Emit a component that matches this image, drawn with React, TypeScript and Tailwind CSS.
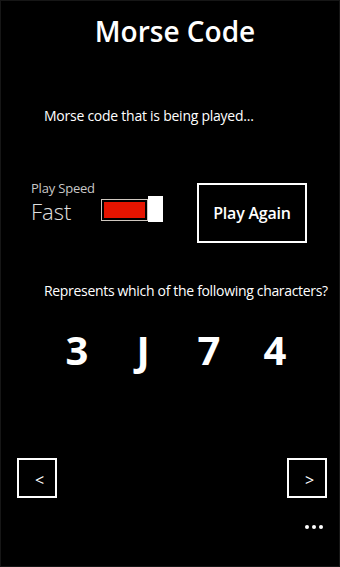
import React from "react";

export default function App() {
  const chars = ["3", "J", "7", "4"];
  return (
    <div
      className="w-[340px] h-[567px] bg-black text-white flex flex-col border border-[#161616] overflow-hidden box-border"
      style={{ fontFamily: '"Open Sans", "Noto Sans", sans-serif' }}
    >
      <div className="mt-[13px] pl-[10px] text-center text-[28px] font-semibold leading-[34px]">
        Morse Code
      </div>

      <div className="mt-[58px] pl-[43px] text-[14px] leading-[20px] tracking-[-0.25px] whitespace-nowrap">
        Morse code that is being played...
      </div>

      <div className="mt-[54px] flex items-start">
        <div className="pl-[30px] flex flex-col">
          <div className="text-[13px] leading-[16px] tracking-[-0.2px] text-[#c8c8c8]">Play Speed</div>
          <div className="mt-[2px] flex items-start">
            <div className="w-[70px] text-[22px] font-light leading-[26px] text-[#e0e0e0]">Fast</div>
            <div className="-mt-[2px] flex items-start">
              <div className="mt-[3px] w-[47px] h-[22px] border border-[#cfc7bf] p-[2px] box-border">
                <div className="w-full h-full bg-[#e51400]" />
              </div>
              <div className="w-[15px] h-[26px] bg-white" />
            </div>
          </div>
        </div>
        <div className="ml-auto mr-[32px] mt-[3px] w-[110px] h-[60px] border-2 border-white flex items-center justify-center text-[16px] font-semibold tracking-[-0.2px]">
          Play Again
        </div>
      </div>

      <div className="mt-[38px] pl-[43px] text-[14px] leading-[20px] tracking-[-0.32px] whitespace-nowrap">
        Represents which of the following characters?
      </div>

      <div className="mt-[25px] pl-[43px] grid grid-cols-[66px_66px_66px_66px] text-[40px] font-bold leading-[48px]">
        {chars.map((c) => (
          <div key={c} className="text-center">
            {c}
          </div>
        ))}
      </div>

      <div className="mt-[84px] flex justify-between pl-[16px] pr-[12px]">
        <div className="w-[40px] h-[40px] border-2 border-white flex items-center justify-center pl-[5px] pt-[4px] text-[16px] leading-none">
          &lt;
        </div>
        <div className="w-[40px] h-[40px] border-2 border-white flex items-center justify-center pl-[5px] pt-[4px] text-[16px] leading-none">
          &gt;
        </div>
      </div>

      <div className="mt-[27px] flex justify-end gap-[3px] pr-[16px]">
        <div className="w-[4px] h-[4px] rounded-full bg-white" />
        <div className="w-[4px] h-[4px] rounded-full bg-white" />
        <div className="w-[4px] h-[4px] rounded-full bg-white" />
      </div>
    </div>
  );
}
